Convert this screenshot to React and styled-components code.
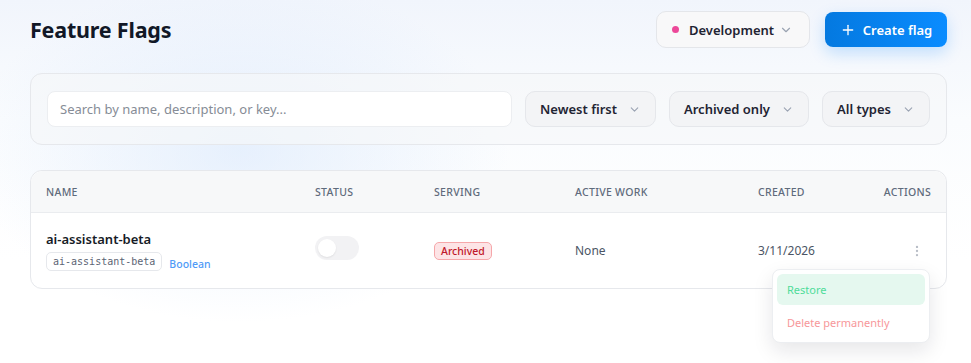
import React from "react";
import styled, { createGlobalStyle } from "styled-components";
import { ChevronDown, Plus, MoreVertical } from "lucide-react";

const GlobalStyle = createGlobalStyle`
  html, body {
    margin: 0;
    padding: 0;
  }
  body {
    font-family: "Noto Sans", "Open Sans", "Liberation Sans", sans-serif;
    color: #0f172a;
    background: #ffffff;
  }
  * { box-sizing: border-box; }
`;

const Page = styled.div`
  min-height: 363px;
  padding: 11px 24px 40px 30px;
  background:
    radial-gradient(ellipse 360px 230px at 240px 150px, rgba(214, 230, 252, 0.55), rgba(214, 230, 252, 0) 75%),
    linear-gradient(180deg, #f1f5fc 0px, #fafcfe 120px, #ffffff 260px);
  display: flex;
  flex-direction: column;
  gap: 25px;
`;

const Header = styled.header`
  display: flex;
  align-items: center;
  justify-content: space-between;
  height: 37px;
`;

const Title = styled.h1`
  margin: 0;
  font-size: 21.5px;
  font-weight: 700;
  letter-spacing: -0.2px;
  color: #111827;
`;

const HeaderActions = styled.div`
  display: flex;
  align-items: center;
  gap: 15px;
`;

const EnvSelect = styled.button`
  display: flex;
  align-items: center;
  height: 37px;
  width: 154px;
  padding: 0 16px 0 15px;
  border: 1px solid #e4e6ea;
  border-radius: 10px;
  background: #f8f8f9;
  font-family: inherit;
  font-size: 13px;
  font-weight: 600;
  color: #1f2433;
  cursor: pointer;
`;

const Dot = styled.span`
  width: 7px;
  height: 7px;
  border-radius: 50%;
  background: ${(p) => p.color};
  margin-right: 10px;
`;

const Grow = styled.span`
  flex: 1;
  text-align: left;
`;

const PrimaryButton = styled.button`
  display: flex;
  align-items: center;
  gap: 7px;
  height: 35px;
  width: 122px;
  justify-content: center;
  border: none;
  border-radius: 8px;
  background: linear-gradient(90deg, #0479e0, #0a8cff);
  box-shadow: 0 6px 16px rgba(10, 132, 255, 0.22);
  color: #fff;
  font-family: inherit;
  font-size: 13px;
  font-weight: 600;
  cursor: pointer;
`;

const FilterPanel = styled.section`
  display: flex;
  align-items: center;
  gap: 13px;
  padding: 17px 16px;
  border: 1px solid #e6e8ec;
  border-radius: 12px;
  background: rgba(246, 247, 249, 0.65);
`;

const SearchInput = styled.input`
  flex: 1;
  height: 36px;
  padding: 0 12px;
  border: 1px solid #eceef1;
  border-radius: 8px;
  background: #ffffff;
  font-family: inherit;
  font-size: 13px;
  color: #111827;
  outline: none;
  &::placeholder {
    color: #868c96;
  }
`;

const FilterSelect = styled.button`
  display: flex;
  align-items: center;
  gap: 11px;
  height: 36px;
  padding: 0 14px;
  border: 1px solid #e5e7eb;
  border-radius: 10px;
  background: #f3f4f6;
  font-family: inherit;
  font-size: 13px;
  font-weight: 600;
  color: #1f2433;
  cursor: pointer;
`;

const TableCard = styled.section`
  border: 1px solid #e6e8ec;
  border-radius: 12px;
  background: #ffffff;
`;

const Row = styled.div`
  display: grid;
  grid-template-columns: 269px 119px 141px 183px 1fr auto;
  align-items: center;
  padding: 0 15px;
`;

const HeadRow = styled(Row)`
  height: 42px;
  background: #f7f8f9;
  border-bottom: 1px solid #eaecef;
  border-radius: 12px 12px 0 0;
`;

const HeadCell = styled.div`
  font-size: 10.5px;
  font-weight: 500;
  letter-spacing: 0.3px;
  text-transform: uppercase;
  color: #5f6b7c;
  text-align: ${(p) => (p.$right ? "right" : "left")};
`;

const BodyRow = styled(Row)`
  height: 75px;
`;

const NameCell = styled.div`
  display: flex;
  flex-direction: column;
  gap: 3px;
`;

const FlagName = styled.div`
  font-size: 13px;
  font-weight: 600;
  color: #161b26;
`;

const MetaLine = styled.div`
  display: flex;
  align-items: center;
  gap: 7px;
`;

const KeyChip = styled.code`
  display: inline-block;
  padding: 3px 6px;
  border: 1px solid #e6e8ec;
  border-radius: 5px;
  font-family: "DejaVu Sans Mono", "Liberation Mono", monospace;
  font-size: 10px;
  color: #5b6473;
  background: #fff;
`;

const TypeLabel = styled.span`
  font-size: 10.5px;
  font-weight: 500;
  color: #4f9bf7;
  padding-top: 6px;
`;

const ToggleCell = styled.div`
  padding-bottom: 6px;
`;

const Toggle = styled.div`
  width: 44px;
  height: 24px;
  border-radius: 12px;
  background: #f2f2f4;
  padding: 3px;
  display: flex;
  align-items: center;
`;

const Knob = styled.span`
  width: 18px;
  height: 18px;
  border-radius: 50%;
  background: #fff;
  box-shadow: 0 1px 2px rgba(0, 0, 0, 0.08);
`;

const Badge = styled.span`
  justify-self: start;
  display: inline-block;
  padding: 1px 6px;
  border: 1px solid #f6a7aa;
  border-radius: 5px;
  background: #fde4e6;
  color: #c0182a;
  font-size: 10.5px;
  font-weight: 500;
`;

const Muted = styled.div`
  font-size: 12px;
  color: #4b5565;
`;

const ActionCell = styled.div`
  position: relative;
  display: flex;
  justify-content: flex-end;
  padding-right: 7px;
  color: #b9bec7;
`;

const Menu = styled.div`
  position: absolute;
  top: 25px;
  right: 1px;
  width: 158px;
  padding: 4px;
  border: 1px solid #eceef1;
  border-radius: 8px;
  background: #fff;
  box-shadow: 0 8px 20px rgba(15, 23, 42, 0.1);
  display: flex;
  flex-direction: column;
  gap: 2px;
  z-index: 2;
`;

const MenuItem = styled.div`
  height: 31px;
  padding: 0 10px;
  display: flex;
  align-items: center;
  border-radius: 6px;
  font-size: 11px;
  color: ${(p) => p.$tone};
  background: ${(p) => p.$bg || "transparent"};
`;

export default function App() {
  return (
    <>
      <GlobalStyle />
      <Page>
        <Header>
          <Title>Feature Flags</Title>
          <HeaderActions>
            <EnvSelect>
              <Dot color="#ec4899" />
              <Grow>Development</Grow>
              <ChevronDown size={14} color="#9aa3b2" />
            </EnvSelect>
            <PrimaryButton>
              <Plus size={16} strokeWidth={2} />
              Create flag
            </PrimaryButton>
          </HeaderActions>
        </Header>

        <FilterPanel>
          <SearchInput placeholder="Search by name, description, or key..." />
          <FilterSelect>
            Newest first <ChevronDown size={13} color="#9aa3b2" />
          </FilterSelect>
          <FilterSelect>
            Archived only <ChevronDown size={13} color="#9aa3b2" />
          </FilterSelect>
          <FilterSelect>
            All types <ChevronDown size={13} color="#9aa3b2" />
          </FilterSelect>
        </FilterPanel>

        <TableCard>
          <HeadRow>
            <HeadCell>Name</HeadCell>
            <HeadCell>Status</HeadCell>
            <HeadCell>Serving</HeadCell>
            <HeadCell>Active work</HeadCell>
            <HeadCell>Created</HeadCell>
            <HeadCell $right>Actions</HeadCell>
          </HeadRow>
          <BodyRow>
            <NameCell>
              <FlagName>ai-assistant-beta</FlagName>
              <MetaLine>
                <KeyChip>ai-assistant-beta</KeyChip>
                <TypeLabel>Boolean</TypeLabel>
              </MetaLine>
            </NameCell>
            <ToggleCell>
              <Toggle>
                <Knob />
              </Toggle>
            </ToggleCell>
            <Badge>Archived</Badge>
            <Muted>None</Muted>
            <Muted>3/11/2026</Muted>
            <ActionCell>
              <MoreVertical size={14} />
              <Menu>
                <MenuItem $tone="#4fdc9a" $bg="#e5f8ef">Restore</MenuItem>
                <MenuItem $tone="#f7979a">Delete permanently</MenuItem>
              </Menu>
            </ActionCell>
          </BodyRow>
        </TableCard>
      </Page>
    </>
  );
}
